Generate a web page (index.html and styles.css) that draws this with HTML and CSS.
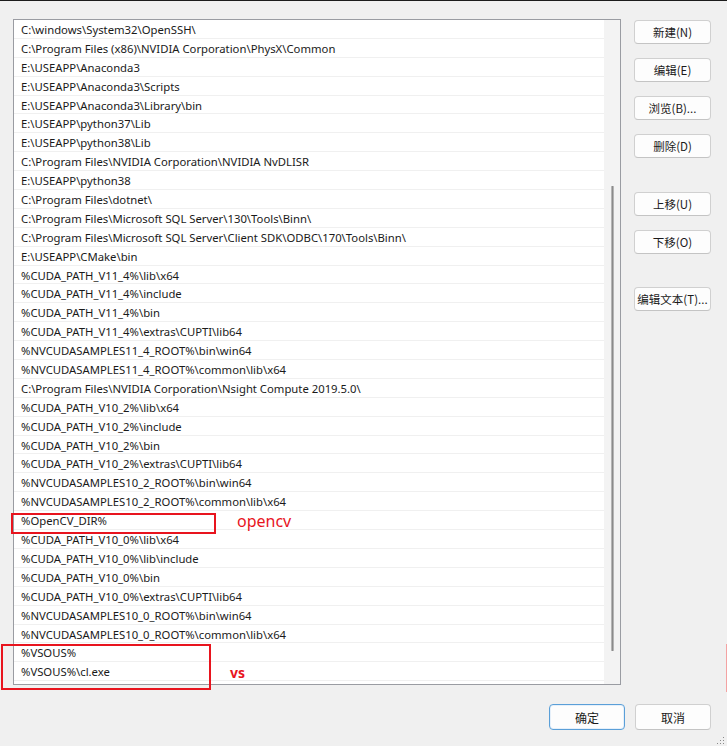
FILE: index.html
```html
<!DOCTYPE html>
<html>
<head>
<meta charset="utf-8">
<link rel="stylesheet" href="styles.css">
</head>
<body>
<div class="window">
  <div class="main">
    <div class="listbox">
      <div class="rows">
        <div class="row">C:\windows\System32\OpenSSH\</div>
        <div class="row">C:\Program Files (x86)\NVIDIA Corporation\PhysX\Common</div>
        <div class="row">E:\USEAPP\Anaconda3</div>
        <div class="row">E:\USEAPP\Anaconda3\Scripts</div>
        <div class="row">E:\USEAPP\Anaconda3\Library\bin</div>
        <div class="row">E:\USEAPP\python37\Lib</div>
        <div class="row">E:\USEAPP\python38\Lib</div>
        <div class="row">C:\Program Files\NVIDIA Corporation\NVIDIA NvDLISR</div>
        <div class="row">E:\USEAPP\python38</div>
        <div class="row">C:\Program Files\dotnet\</div>
        <div class="row">C:\Program Files\Microsoft SQL Server\130\Tools\Binn\</div>
        <div class="row">C:\Program Files\Microsoft SQL Server\Client SDK\ODBC\170\Tools\Binn\</div>
        <div class="row">E:\USEAPP\CMake\bin</div>
        <div class="row">%CUDA_PATH_V11_4%\lib\x64</div>
        <div class="row">%CUDA_PATH_V11_4%\include</div>
        <div class="row">%CUDA_PATH_V11_4%\bin</div>
        <div class="row">%CUDA_PATH_V11_4%\extras\CUPTI\lib64</div>
        <div class="row">%NVCUDASAMPLES11_4_ROOT%\bin\win64</div>
        <div class="row">%NVCUDASAMPLES11_4_ROOT%\common\lib\x64</div>
        <div class="row">C:\Program Files\NVIDIA Corporation\Nsight Compute 2019.5.0\</div>
        <div class="row">%CUDA_PATH_V10_2%\lib\x64</div>
        <div class="row">%CUDA_PATH_V10_2%\include</div>
        <div class="row">%CUDA_PATH_V10_2%\bin</div>
        <div class="row">%CUDA_PATH_V10_2%\extras\CUPTI\lib64</div>
        <div class="row">%NVCUDASAMPLES10_2_ROOT%\bin\win64</div>
        <div class="row">%NVCUDASAMPLES10_2_ROOT%\common\lib\x64</div>
        <div class="row">%OpenCV_DIR%</div>
        <div class="row">%CUDA_PATH_V10_0%\lib\x64</div>
        <div class="row">%CUDA_PATH_V10_0%\lib\include</div>
        <div class="row">%CUDA_PATH_V10_0%\bin</div>
        <div class="row">%CUDA_PATH_V10_0%\extras\CUPTI\lib64</div>
        <div class="row">%NVCUDASAMPLES10_0_ROOT%\bin\win64</div>
        <div class="row">%NVCUDASAMPLES10_0_ROOT%\common\lib\x64</div>
        <div class="row">%VSOUS%</div>
        <div class="row">%VSOUS%\cl.exe</div>
      </div>
      <div class="scrollbar"><div class="thumb"></div></div>
    </div>
    <div class="side">
      <button class="btn">新建(N)</button>
      <button class="btn g14">编辑(E)</button>
      <button class="btn g14">浏览(B)...</button>
      <button class="btn g14">删除(D)</button>
      <button class="btn g34">上移(U)</button>
      <button class="btn g14">下移(O)</button>
      <button class="btn g33">编辑文本(T)...</button>
    </div>
  </div>
  <div class="footer">
    <button class="btn big primary">确定</button>
    <button class="btn big">取消</button>
  </div>

  <div class="mark mark-cv"></div>
  <div class="note note-cv">opencv</div>
  <div class="mark mark-vs"></div>
  <div class="note note-vs">vs</div>
  <div class="edge-mark"></div>
  <svg class="grip" width="10" height="10" viewBox="0 0 10 10">
    <rect x="8" y="2" width="1" height="1" fill="#8a8a8a"/>
    <rect x="5" y="5" width="1" height="1" fill="#8a8a8a"/>
    <rect x="8" y="5" width="1" height="1" fill="#8a8a8a"/>
    <rect x="2" y="8" width="1" height="1" fill="#8a8a8a"/>
    <rect x="5" y="8" width="1" height="1" fill="#8a8a8a"/>
    <rect x="8" y="8" width="1" height="1" fill="#8a8a8a"/>
  </svg>
</div>
</body>
</html>
```

FILE: styles.css
```css
* { box-sizing: border-box; }
html, body { margin: 0; padding: 0; }
body {
  background: #f0f0f0;
  font-family: "Noto Sans", "Noto Sans CJK SC", sans-serif;
  font-size: 12px;
  color: #1a1a1a;
}
.window {
  position: relative;
  width: 727px;
  height: 746px;
  border-top: 1px solid #1c1c1c;
  overflow: hidden;
}
.main {
  display: flex;
  padding: 18px 0 0 13px;
  gap: 13px;
}
.listbox {
  width: 608px;
  height: 666px;
  border: 1px solid #9a9ca2;
  background: #ffffff;
  display: flex;
}
.rows {
  width: 590px;
  overflow: hidden;
}
.row {
  height: 18.9px;
  line-height: 18px;
  padding-top: 1px;
  padding-left: 7px;
  font-size: 11.3px;
  border-bottom: 1px solid #f0f0f0;
  white-space: nowrap;
}
.scrollbar {
  width: 16px;
  background: #f3f3f3;
  padding-top: 166px;
  display: flex;
  justify-content: center;
}
.thumb {
  width: 3px;
  height: 465px;
  background: #8b8b8b;
  border-left: 1px solid #b5b5b5;
  border-right: 1px solid #b5b5b5;
  border-radius: 1px;
}
.side {
  display: flex;
  flex-direction: column;
  padding-top: 1px;
}
.btn {
  width: 77px;
  height: 24px;
  padding: 0;
  background: #fdfdfd;
  border: 1px solid #d0d0d0;
  border-bottom-color: #c4c4c4;
  border-radius: 4px;
  font-family: "Noto Sans CJK SC", "Noto Sans", sans-serif;
  font-size: 11.5px;
  color: #1a1a1a;
}
.g14 { margin-top: 14px; }
.g34 { margin-top: 34px; }
.g33 { margin-top: 33px; }
.footer {
  display: flex;
  justify-content: flex-end;
  gap: 10px;
  padding: 19px 16px 0 0;
}
.btn.big {
  width: 76px;
  height: 26px;
  font-size: 12px;
}
.btn.primary {
  border: 1px solid #5a9fd8;
  box-shadow: inset 0 0 0 1px #e6f0fa;
}
.mark {
  position: absolute;
  border: 2px solid #e8141e;
}
.mark-cv { left: 11px; top: 512px; width: 205px; height: 21px; }
.mark-vs { left: 1px; top: 643px; width: 210px; height: 46px; }
.note {
  position: absolute;
  color: #e8141e;
  font-family: "Noto Sans", sans-serif;
  font-size: 16px;
  line-height: 18px;
}
.note-cv { left: 237px; top: 511px; }
.note-vs { left: 230px; top: 663px; font-weight: bold; font-size: 14px; }
.edge-mark {
  position: absolute;
  right: 0;
  top: 643px;
  width: 1px;
  height: 48px;
  background: #f4a3a3;
}
.grip {
  position: absolute;
  right: 2px;
  bottom: 1px;
}
```
